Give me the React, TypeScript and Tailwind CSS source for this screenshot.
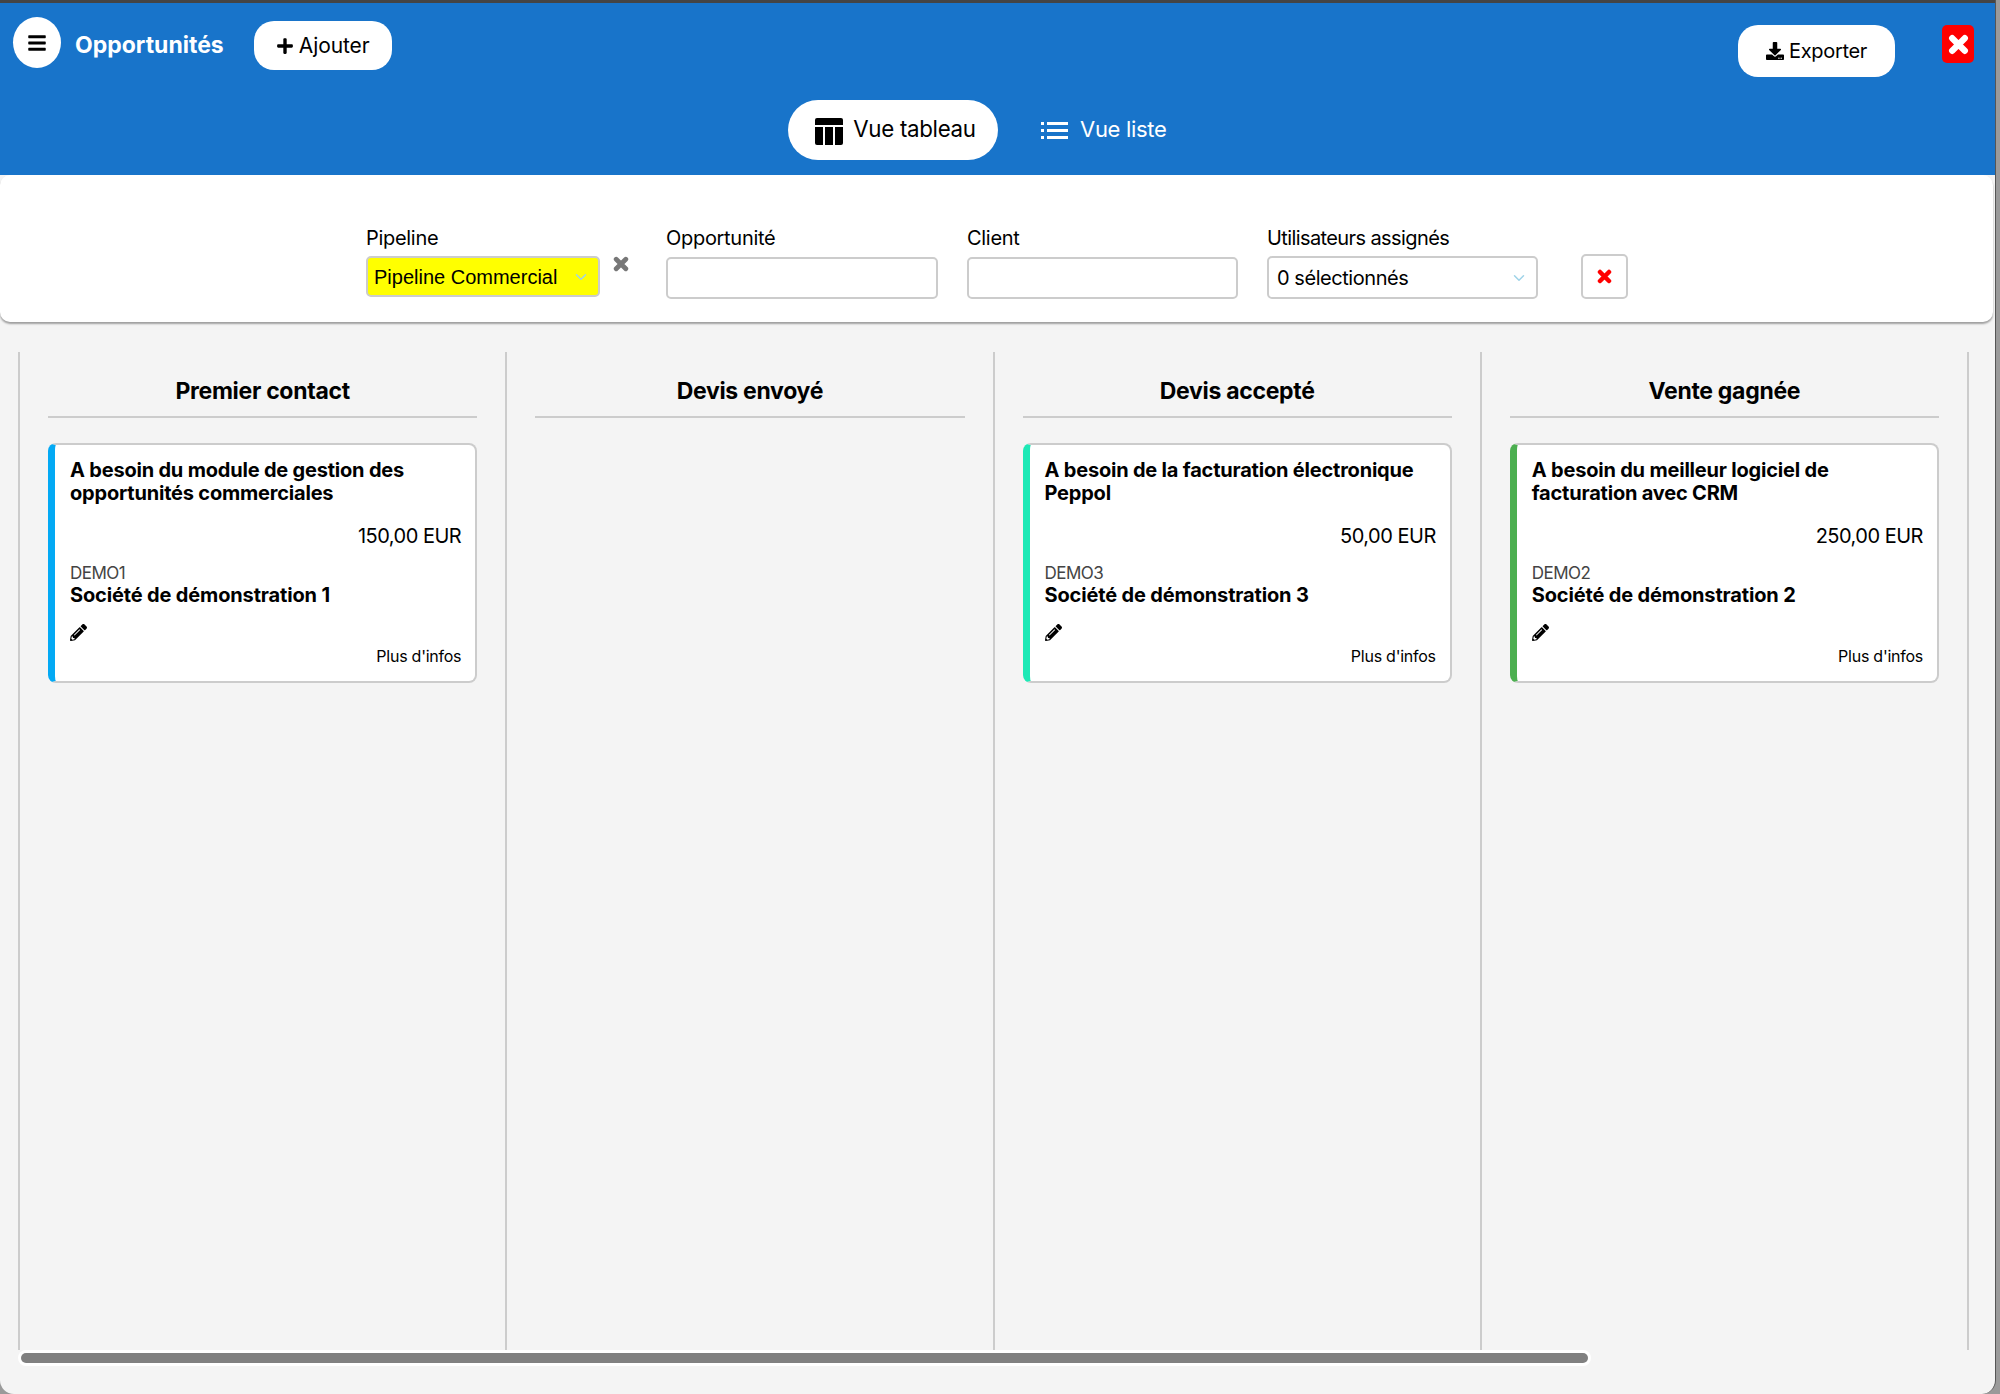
import React from "react";
import { FaBars, FaPlus, FaDownload, FaPencilAlt } from "react-icons/fa";
import { ChevronDown } from "lucide-react";

const cols = [
  { t: "Premier contact", card: { c: "border-l-[#03a9f4]", title: "A besoin du module de gestion des opportunités commerciales", amt: "150,00 EUR", code: "DEMO1", co: "Société de démonstration 1" } },
  { t: "Devis envoyé" },
  { t: "Devis accepté", card: { c: "border-l-[#1de9b6]", title: "A besoin de la facturation électronique Peppol", amt: "50,00 EUR", code: "DEMO3", co: "Société de démonstration 3" } },
  { t: "Vente gagnée", card: { c: "border-l-[#4caf50]", title: "A besoin du meilleur logiciel de facturation avec CRM", amt: "250,00 EUR", code: "DEMO2", co: "Société de démonstration 2" } },
];

function XIcon({ size, color }: { size: number; color: string }) {
  return (
    <svg width={size} height={size} viewBox="0 0 20 20" fill="none" stroke={color} strokeWidth="6" strokeLinecap="round">
      <path d="M4 4L16 16M16 4L4 16" />
    </svg>
  );
}

function TableIcon() {
  return (
    <svg width="28" height="27" viewBox="0 0 28 27" fill="#000">
      <path d="M2 0h24a2 2 0 0 1 2 2v5H0V2a2 2 0 0 1 2-2z" />
      <path d="M0 9h8v18H2a2 2 0 0 1-2-2z" />
      <rect x="10" y="9" width="8" height="18" />
      <path d="M20 9h8v16a2 2 0 0 1-2 2h-6z" />
    </svg>
  );
}

function ListIcon() {
  return (
    <svg width="27" height="17" viewBox="0 0 27 17" fill="#fff">
      <rect x="0" y="0" width="3" height="3" />
      <rect x="6" y="0" width="21" height="3" />
      <rect x="0" y="7" width="3" height="3" />
      <rect x="6" y="7" width="21" height="3" />
      <rect x="0" y="14" width="3" height="3" />
      <rect x="6" y="14" width="21" height="3" />
    </svg>
  );
}

export default function App() {
  return (
    <div className="w-[2000px] h-[1394px] overflow-hidden bg-[#9a9a9a] font-['Inter',sans-serif] text-black">
      <div className="w-[1996px] h-[1394px] bg-[#f4f4f4] rounded-b-[14px] border-r border-[#555] flex flex-col">
        <header className="h-[175px] shrink-0 bg-[#1874ca] border-t-[3px] border-[#444] flex flex-col">
          <div className="h-[97px] shrink-0 flex items-start pl-[13px]">
            <button className="mt-[14px] w-[48px] h-[51px] rounded-[50%] bg-white flex items-center justify-center text-[20px]">
              <FaBars />
            </button>
            <h1 className="ml-[14px] mt-[27px] text-[23px] leading-[30px] font-bold text-white tracking-[0px]">Opportunités</h1>
            <button className="ml-[30px] mt-[18px] w-[138px] h-[49px] rounded-[20px] bg-white flex items-center justify-center gap-[5px] text-[21px] tracking-[-0.1px]">
              <FaPlus className="text-[18px]" />
              Ajouter
            </button>
            <button className="ml-auto mt-[22px] w-[157px] h-[52px] rounded-[20px] bg-white flex items-center justify-center gap-[5px] text-[20px] tracking-[-0.3px]">
              <FaDownload className="text-[18px]" />
              Exporter
            </button>
            <button className="ml-[47px] mr-[21px] mt-[22px] w-[32px] h-[38px] rounded-[5px] bg-[#ff0000] flex items-center justify-center">
              <XIcon size={21} color="#fff" />
            </button>
          </div>
          <div className="flex items-start pl-[788px]">
            <button className="w-[210px] h-[60px] pl-[5px] rounded-[30px] bg-white flex items-center justify-center gap-[10px] text-[22.3px] tracking-[-0.3px]">
              <span className="pt-[2px]"><TableIcon /></span>
              <span className="pb-[2px]">Vue tableau</span>
            </button>
            <button className="ml-[43px] h-[58px] flex items-center gap-[12px] text-[22px] text-white tracking-[-0.3px]">
              <span className="pt-[2px]"><ListIcon /></span>
              Vue liste
            </button>
          </div>
        </header>

        <section className="h-[147px] shrink-0 mr-[2px] bg-white rounded-[10px] shadow-[0_2px_2px_rgba(0,0,0,0.35)] flex items-start pl-[366px] pt-[50px] text-[20px] tracking-[-0.3px]">
          <div className="w-[234px]">
            <div className="h-[31px] leading-[26px]">Pipeline</div>
            <div className="h-[41px] rounded-[5px] border-2 border-[#ccc] bg-[#ffff00] flex items-center pl-[6px] pr-[8px] font-['Liberation_Sans',sans-serif] tracking-normal">
              <span className="flex-1">Pipeline Commercial</span>
              <ChevronDown className="w-[18px] h-[18px] text-[#9fd3e8]" strokeWidth={2} />
            </div>
          </div>
          <div className="w-[66px] pl-[13px] pt-[31px]">
            <XIcon size={16} color="#777" />
          </div>
          <div className="w-[272px]">
            <div className="h-[32px] leading-[26px]">Opportunité</div>
            <input className="block w-full h-[42px] rounded-[5px] border-2 border-[#ccc] bg-white" />
          </div>
          <div className="w-[271px] ml-[29px]">
            <div className="h-[32px] leading-[26px]">Client</div>
            <input className="block w-full h-[42px] rounded-[5px] border-2 border-[#ccc] bg-white" />
          </div>
          <div className="w-[271px] ml-[29px]">
            <div className="h-[31px] leading-[26px] tracking-[-0.6px]">Utilisateurs assignés</div>
            <div className="h-[43px] rounded-[5px] border-2 border-[#ccc] bg-white flex items-center pl-[8px] pr-[8px] tracking-[-0.45px]">
              <span className="flex-1">0 sélectionnés</span>
              <ChevronDown className="w-[18px] h-[18px] text-[#9fd3e8]" strokeWidth={2} />
            </div>
          </div>
          <button className="ml-[43px] mt-[29px] w-[47px] h-[45px] rounded-[5px] border-2 border-[#ccc] bg-white flex items-center justify-center">
            <XIcon size={15} color="#ff0000" />
          </button>
        </section>

        <main className="flex pl-[18px] mt-[30px] h-[998px] shrink-0">
          {cols.map((col) => (
            <div key={col.t} className="w-[487.25px] shrink-0 border-l-2 border-[#ccc] px-[28px]">
              <h2 className="h-[66px] border-b-2 border-[#ccc] text-center text-[23px] font-bold leading-[78px] tracking-[-0.3px]">{col.t}</h2>
              {col.card && (
                <div className={"mt-[25px] h-[240px] rounded-[8px] border-2 border-[#ccc] border-l-[7px] bg-white pl-[15px] pr-[14px] pt-[14px] " + col.card.c}>
                  <div className="text-[20px] font-bold leading-[23px] tracking-[-0.2px]">{col.card.title}</div>
                  <div className="mt-[18px] text-right text-[20px] leading-[26px] tracking-[-0.5px]">{col.card.amt}</div>
                  <div className="mt-[13px] text-[17px] leading-[22px] text-[#444] tracking-[-0.5px]">{col.card.code}</div>
                  <div className="text-[20px] font-bold leading-[23px] tracking-[-0.15px]">{col.card.co}</div>
                  <FaPencilAlt className="mt-[17px] text-[17px]" />
                  <div className="mt-[4px] text-right text-[16px] leading-[22px] tracking-[-0.25px]">Plus d'infos</div>
                </div>
              )}
            </div>
          ))}
          <div className="w-0 border-l-2 border-[#ccc]" />
        </main>

        <div className="ml-[18px] w-[1573px] h-[16px] shrink-0 rounded-[8px] bg-white p-[3px]">
          <div className="h-full rounded-[5px] bg-[#808080]" />
        </div>
      </div>
    </div>
  );
}
